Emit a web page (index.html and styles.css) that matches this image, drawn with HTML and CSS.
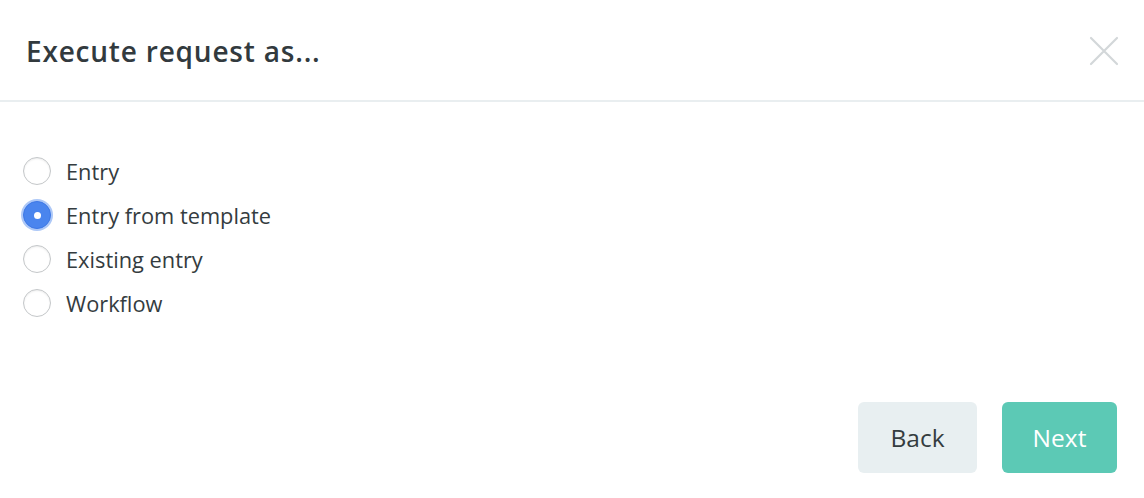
FILE: index.html
```html
<!DOCTYPE html>
<html lang="en">
<head>
    <meta charset="UTF-8">
    <meta name="viewport" content="width=device-width, initial-scale=1.0">
    <title>Execute request as</title>
    <link rel="stylesheet" href="styles.css">
</head>
<body>
<div class="modal">
    <div class="modal-header">
        <h1>Execute request as...</h1>
        <button class="close" aria-label="Close">
            <svg width="30" height="30" viewBox="0 0 30 30">
                <path d="M2 2 L28 28 M28 2 L2 28" stroke="#d3d7d9" stroke-width="2.2" stroke-linecap="round" fill="none"/>
            </svg>
        </button>
    </div>
    <div class="modal-body">
        <label class="option"><span class="radio"></span>Entry</label>
        <label class="option"><span class="radio checked"></span>Entry from template</label>
        <label class="option"><span class="radio"></span>Existing entry</label>
        <label class="option"><span class="radio"></span>Workflow</label>
    </div>
    <div class="modal-footer">
        <button class="btn btn-back">Back</button>
        <button class="btn btn-next">Next</button>
    </div>
</div>
</body>
</html>
```

FILE: styles.css
```css
body {
    margin: 0;
    font-family: "Open Sans", Lato, Arial, sans-serif;
    background: #ffffff;
    color: #343c40;
}

.modal {
    width: 1144px;
    height: 498px;
    display: flex;
    flex-direction: column;
}

.modal-header {
    height: 100px;
    border-bottom: 2px solid #e9eef0;
    display: flex;
    align-items: center;
    justify-content: space-between;
    padding: 0 25px 0 26px;
}
.modal-header h1 {
    margin: 2px 0 0;
    font-size: 28px;
    font-weight: 600;
    color: #323a3e;
    letter-spacing: 0.8px;
}
.close {
    border: none;
    background: none;
    padding: 0;
    width: 30px;
    height: 30px;
    margin-top: 2px;
}

.modal-body {
    padding: 47px 23px 0;
    display: flex;
    flex-direction: column;
    flex: 1;
}
.option {
    display: flex;
    align-items: center;
    height: 44px;
    font-size: 21.8px;
    color: #343c40;
}
.radio {
    width: 28px;
    height: 28px;
    border: 1px solid #c4c7c9;
    border-radius: 50%;
    box-sizing: border-box;
    margin-right: 15px;
    box-shadow: inset 0 1px 2px rgba(0, 0, 0, 0.08);
    display: flex;
    align-items: center;
    justify-content: center;
}
.radio.checked {
    background: #4a85ee;
    border: 1px solid #3d78e6;
    box-shadow: 0 0 0 2px rgba(74, 133, 238, 0.45);
}
.radio.checked::after {
    content: "";
    width: 7px;
    height: 7px;
    border-radius: 50%;
    background: #ffffff;
}

.modal-footer {
    display: flex;
    justify-content: flex-end;
    gap: 25px;
    padding: 0 27px 25px;
}
.btn {
    height: 71px;
    border: none;
    border-radius: 6px;
    font-family: inherit;
    font-size: 24.5px;
}
.btn-back {
    width: 119px;
    background: #e8eff1;
    color: #343c40;
}
.btn-next {
    width: 115px;
    background: #5cc9b5;
    color: #ffffff;
}
```
